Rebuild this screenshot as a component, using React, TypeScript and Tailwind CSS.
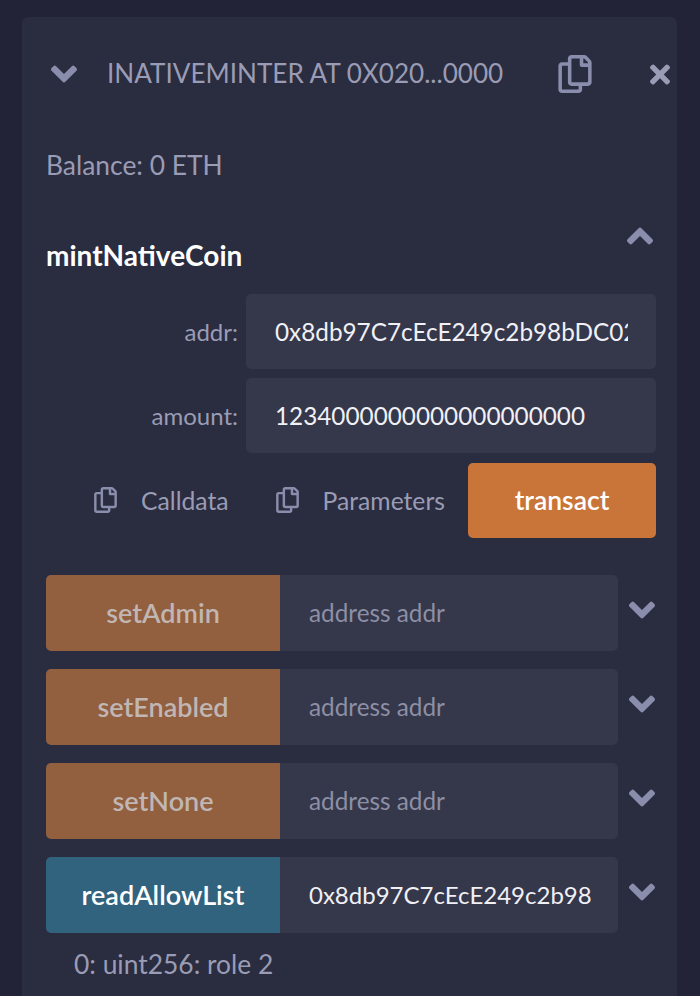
import { FaAngleDown, FaAngleUp, FaRegCopy, FaTimes } from "react-icons/fa";

const font = "font-['Lato','Noto_Sans',sans-serif]";

type MethodRowProps = {
  name: string;
  color: string;
  value?: string;
  dim?: boolean;
};

const methods: MethodRowProps[] = [
  { name: "setAdmin", color: "bg-[#925f3f]", dim: true },
  { name: "setEnabled", color: "bg-[#925f3f]", dim: true },
  { name: "setNone", color: "bg-[#925f3f]", dim: true },
  { name: "readAllowList", color: "bg-[#31637f]", value: "0x8db97C7cEcE249c2b98bDC0226Cc4C2A57BF52FC" },
];

function MethodRow({ name, color, value, dim }: MethodRowProps) {
  return (
    <div className="flex h-[76px] items-start">
      <div className="flex h-[76px] w-[572px]">
        <button
          type="button"
          className={`w-[234px] shrink-0 rounded-l-[5px] text-[27px] font-semibold ${color} ${dim ? "text-[#c0b6b4]" : "text-white"}`}
        >
          {name}
        </button>
        <input
          readOnly
          value={value ?? ""}
          placeholder="address addr"
          className="w-full min-w-0 rounded-r-[5px] bg-[#35374b] pr-[27px] pl-[29px] text-[24px] text-[#f0f0f5] outline-none placeholder:text-[24.3px] placeholder:text-[#8d8fa5]"
        />
      </div>
      <FaAngleDown className="mt-[14px] ml-[11px] h-[42px] w-[26px] shrink-0 text-[#8a8dab]" />
    </div>
  );
}

function ArgRow({ label, value }: { label: string; value: string }) {
  return (
    <div className="flex h-[75px] items-center justify-end">
      <label className="mr-[8px] text-[24px] text-[#9a9cb5]">{label}</label>
      <input
        readOnly
        value={value}
        className="h-[75px] w-[410px] rounded-[5px] bg-[#35374b] pr-[28px] pl-[29px] text-[24.3px] text-[#f0f0f5] outline-none"
      />
    </div>
  );
}

function CopyAction({ label, className }: { label: string; className: string }) {
  return (
    <div className={`flex items-center text-[24.7px] text-[#9a9cb5] ${className}`}>
      <FaRegCopy className="mr-[24px] h-[26px] w-[23px] text-[#8a8dab]" />
      <span>{label}</span>
    </div>
  );
}

export default function App() {
  return (
    <div className={`h-[996px] w-[700px] overflow-hidden bg-[#222336] pt-[17px] pl-[22px] ${font}`}>
      <div className="h-[979px] w-[655px] rounded-t-[6px] bg-[#2a2c3f]">
        <div className="flex h-[114px] items-center pl-[29px]">
          <FaAngleDown className="h-[42px] w-[26px] shrink-0 text-[#8a8dab]" />
          <span className="ml-[30px] w-[451px] text-[26.1px] whitespace-nowrap text-[#9a9cb5]">
            INATIVEMINTER AT 0X020...0000
          </span>
          <FaRegCopy className="h-[38px] w-[34px] shrink-0 text-[#8a8dab]" />
          <FaTimes className="ml-[58px] h-[29px] w-[20px] shrink-0 text-[#9a9cb5]" />
        </div>

        <div className="px-[21px] pl-[24px]">
          <div className="flex h-[70px] items-center text-[26.4px] text-[#9a9cb5]">Balance: 0 ETH</div>

          <div className="flex h-[93px] items-start justify-between">
            <h2 className="mt-[37px] text-[28px] leading-[34px] font-bold text-white">mintNativeCoin</h2>
            <FaAngleUp className="mt-[14px] mr-[3px] h-[42px] w-[26px] text-[#8a8dab]" />
          </div>

          <div className="flex flex-col gap-[9px]">
            <ArgRow label="addr:" value="0x8db97C7cEcE249c2b98bDC0226Cc4C2A57BF52FC" />
            <ArgRow label="amount:" value="1234000000000000000000" />
          </div>

          <div className="mt-[10px] flex h-[75px] items-center justify-end">
            <CopyAction label="Calldata" className="mr-[47px]" />
            <CopyAction label="Parameters" className="mr-[23px]" />
            <button
              type="button"
              className="h-[75px] w-[188px] rounded-[5px] bg-[#c97539] text-[26.5px] font-semibold text-white"
            >
              transact
            </button>
          </div>

          <div className="mt-[37px] flex flex-col gap-[18px]">
            {methods.map((m) => (
              <MethodRow key={m.name} {...m} />
            ))}
          </div>

          <div className="mt-[14px] pl-[28px] text-[26.4px] leading-[34px] text-[#9a9cb5]">0: uint256: role 2</div>
        </div>
      </div>
    </div>
  );
}
